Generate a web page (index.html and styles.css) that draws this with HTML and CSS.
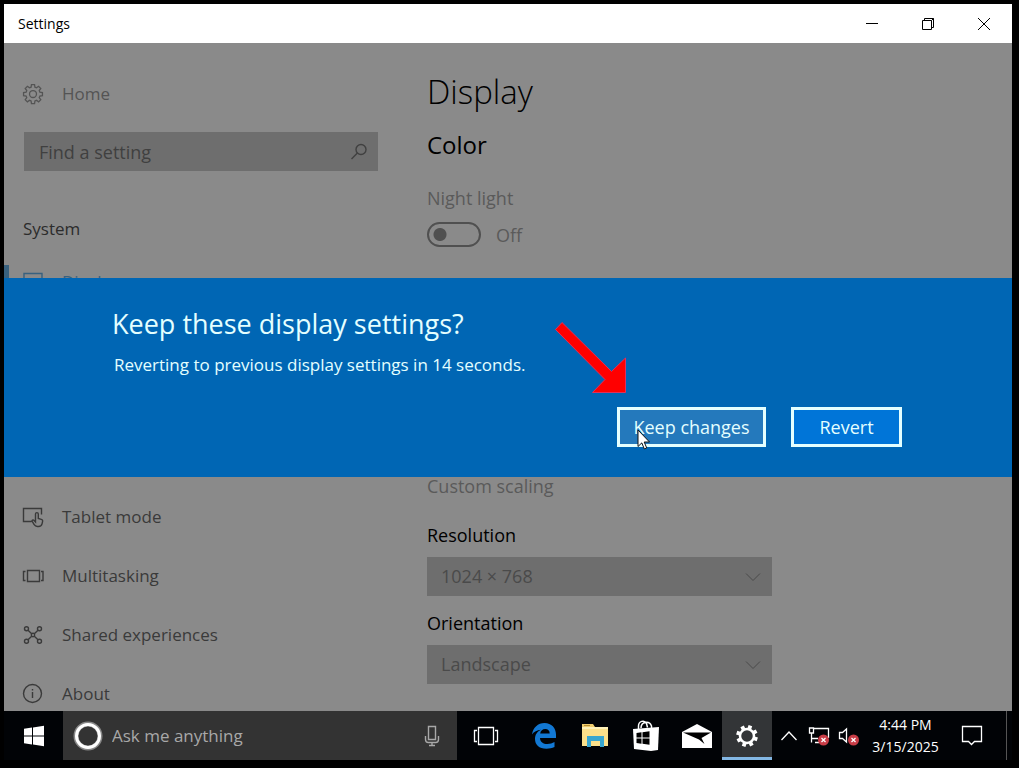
FILE: index.html
```html
<!DOCTYPE html>
<html lang="en">
<head>
    <meta charset="UTF-8">
    <meta name="viewport" content="width=device-width, initial-scale=1.0">
    <title>Settings</title>
    <link rel="stylesheet" href="styles.css">
</head>
<body>
    <header class="titlebar">
        <span class="titlebar-name">Settings</span>
        <div class="window-buttons">
            <button aria-label="Minimize">
                <svg width="14" height="14" viewBox="0 0 14 14"><path d="M1 6.5h12"/></svg>
            </button>
            <button aria-label="Restore">
                <svg width="14" height="14" viewBox="0 0 14 14"><path d="M1.5 3.500h9v9h-9zM3.500 3.500v-2h9v9h-2M10.500 3.500l2-2"/></svg>
            </button>
            <button aria-label="Close">
                <svg width="14" height="14" viewBox="0 0 14 14"><path d="M1 1l12 12M13 1L1 13"/></svg>
            </button>
        </div>
    </header>

    <div class="window">
        <nav class="sidebar">
            <a class="nav-item home" href="#">
                <svg width="22" height="22" viewBox="0 0 24 24"><path d="M10.300 1.800h3.400l.4 2.800 1.700.7 2.300-1.700 2.400 2.400-1.700 2.300.7 1.700 2.800.4v3.400l-2.800.4-.7 1.700 1.700 2.300-2.400 2.400-2.300-1.700-1.700.7-.4 2.800h-3.400l-.4-2.800-1.700-.7-2.300 1.700-2.400-2.400 1.700-2.300-.7-1.700-2.800-.4v-3.400l2.800-.4.7-1.700L3.500 6l2.400-2.400 2.300 1.700 1.700-.7z"/><circle cx="12" cy="12" r="3.800"/></svg>
                Home
            </a>
            <div class="search">
                <input type="text" placeholder="Find a setting" aria-label="Find a setting">
                <svg width="18" height="18" viewBox="0 0 18 18"><circle cx="11" cy="6.500" r="5"/><path d="M7.400 10.100L1.500 16"/></svg>
            </div>
            <h2 class="section-name">System</h2>
            <a class="nav-item active" href="#">
                <svg width="22" height="22" viewBox="0 0 22 22"><path d="M2 2.500h18v12H2zM11 14.500v4M6 18.500h10"/></svg>
                Display
            </a>
            <div class="nav-lower">
                <a class="nav-item" href="#">
                    <svg width="22" height="22" viewBox="0 0 22 22"><path d="M9.500 15.500h-8v-13h18v6M13.500 16V8a1.400 1.400 0 0 1 2.800 0v4.500l3 .8c1 .3 1.500 1 1.300 2l-.5 2.400c-.4 1.800-1.600 2.800-3.500 2.800h-1.200c-1.500 0-2.500-.6-3.200-1.800l-2-3.300c-.5-1 .8-1.900 1.700-1.200z"/></svg>
                    Tablet mode
                </a>
                <a class="nav-item" href="#">
                    <svg width="22" height="22" viewBox="0 0 22 22"><path d="M5.500 5.500h12v11h-12zM3.500 6.500h-2v9h2M19 6.500h2v9h-2"/></svg>
                    Multitasking
                </a>
                <a class="nav-item" href="#">
                    <svg width="22" height="22" viewBox="0 0 22 22"><circle cx="11" cy="11" r="1.700"/><circle cx="4.500" cy="4.700" r="2"/><circle cx="17.500" cy="4.700" r="2"/><circle cx="4.500" cy="17.300" r="2"/><circle cx="17.500" cy="17.300" r="2"/><path d="M6 6.200l3.700 3.600M16 6.200l-3.700 3.600M6 15.800l3.700-3.600M16 15.800l-3.700-3.600"/></svg>
                    Shared experiences
                </a>
                <a class="nav-item" href="#">
                    <svg width="22" height="22" viewBox="0 0 22 22"><circle cx="10.500" cy="10.500" r="9"/><path d="M10.500 9v6M10.500 6v1.500"/></svg>
                    About
                </a>
            </div>
        </nav>

        <main class="content">
            <h1>Display</h1>
            <h2>Color</h2>
            <label class="label muted" for="night-light">Night light</label>
            <div class="toggle-row">
                <input type="checkbox" class="toggle" id="night-light">
                <span class="muted">Off</span>
            </div>
            <a class="scaling-link muted" href="#">Custom scaling</a>
            <label class="label" for="resolution">Resolution</label>
            <div class="select-box">
                <select id="resolution"><option>1024 × 768</option></select>
                <svg width="16" height="10" viewBox="0 0 16 10"><path d="M1 1.500l7 7 7-7"/></svg>
            </div>
            <label class="label" for="orientation">Orientation</label>
            <div class="select-box">
                <select id="orientation"><option>Landscape</option></select>
                <svg width="16" height="10" viewBox="0 0 16 10"><path d="M1 1.500l7 7 7-7"/></svg>
            </div>
        </main>

        <div class="overlay">
            <section class="dialog" role="dialog" aria-labelledby="dialog-title">
                <h2 id="dialog-title">Keep these display settings?</h2>
                <p>Reverting to previous display settings in 14 seconds.</p>
                <div class="dialog-buttons">
                    <div class="keep-wrap">
                        <button class="dialog-btn keep">Keep changes</button>
                        <svg class="arrow" width="72" height="72" viewBox="0 0 72 72"><path d="M7 .5L56.500 49.500 70.500 36v34.500H37.500L50 57.500.5 7.500z"/></svg>
                        <svg class="cursor" width="14" height="22" viewBox="0 0 14 22"><path d="M1 1v16.500l3.800-3.600 2.500 6 2.400-1-2.500-5.900h5.300z"/></svg>
                    </div>
                    <button class="dialog-btn revert">Revert</button>
                </div>
            </section>
        </div>
    </div>

    <footer class="taskbar">
        <button class="start" aria-label="Start">
            <svg width="22" height="22" viewBox="0 0 22 22"><path d="M1 3.700l8-1.200v8H1zM10 2.400L21 .8v9.700H10zM1 11.500h8v8l-8-1.200zM10 11.500h11v9.700L10 19.600z"/></svg>
        </button>
        <div class="cortana">
            <svg width="30" height="30" viewBox="0 0 30 30"><circle class="ring-glow" cx="15" cy="15" r="12"/><circle class="ring" cx="15" cy="15" r="11.500"/></svg>
            <input type="text" placeholder="Ask me anything" aria-label="Ask me anything">
            <svg class="mic" width="16" height="22" viewBox="0 0 16 22"><path d="M4.500 1.500h7v13h-7zM1.500 11v3.500c0 1.800 1 3 2.800 3h7.400c1.800 0 2.800-1.200 2.800-3V11M8 17.500v3M5 20.500h6"/></svg>
        </div>
        <button class="task-view" aria-label="Task view">
            <svg width="26" height="20" viewBox="0 0 26 20"><path d="M5.500 1.500h15v17h-15zM4 4.500H1.500v11H4M22 4.500h2.500v11H22"/></svg>
        </button>
        <div class="apps">
            <button aria-label="Edge">
                <svg width="26" height="27" viewBox="0 0 26 27"><path fill="#1278d3" d="M1 12.500C2 5.500 7 1 13.500 1 20.500 1 25 6 25 12.500V16H9c.2 4 3.300 6 7.300 6 2.800 0 5-.7 7.200-2v5c-2.300 1.200-5 1.700-8 1.700C8 26.700 4 22.800 4 17c0-4.300 2.300-7.500 6-9.200C6 8 3 9.700 1 12.500zM9.200 11.500h9.500C18.700 8.500 17 7 14.300 7c-2.800 0-4.700 1.700-5.100 4.500z"/></svg>
            </button>
            <button aria-label="File Explorer">
                <svg width="28" height="25" viewBox="0 0 28 25"><path fill="#f0cc6c" d="M1 1h11l2 3h13v5H1z"/><path fill="#fbe08a" d="M1 4h26v19H1z"/><path fill="#fff1b8" d="M1 4h26v2H1z"/><path fill="#b58c32" d="M3 2h6v1H3z"/><path fill="#38a6cf" d="M6 24V13h17v11h-4v-6h-9v6z"/></svg>
            </button>
            <button aria-label="Store">
                <svg width="28" height="32" viewBox="0 0 28 32"><path fill="none" stroke="#fff" stroke-width="1.500" d="M6.500 10V6c0-5 6-6.500 8-2.500l1 4M9 8c0-6 8-8 10.500-2V8"/><path fill="#fff" d="M1 9l26-2-1 23-7 1L2 29z"/><path fill="#000" d="M4.500 13l5-.7v5.200h-5zM10.500 12.200l7-1v6.300h-7zM4.500 18.500h5v5.200l-5-.7zM10.500 18.500h7v6.300l-7-1z"/></svg>
            </button>
            <button aria-label="Mail">
                <svg width="32" height="26" viewBox="0 0 32 26"><path fill="#fff" d="M1 9L16 1l15 8v16H1z"/><path fill="#000" d="M2 9.500h28l-9.500 5.500 3 6L18 16.500z"/></svg>
            </button>
            <button class="running" aria-label="Settings">
                <svg width="24" height="24" viewBox="0 0 24 24"><circle fill="none" stroke="#fff" stroke-width="2.500" cx="12" cy="12" r="7"/><path stroke="#fff" stroke-width="3.800" d="M14.200 5.200l1.200-3.500M18.300 8.700l3.300-1.600M18.800 14.200l3.500 1.200M15.300 18.300l1.600 3.300M9.800 18.800l-1.200 3.500M5.700 15.300l-3.300 1.600M5.200 9.800L1.700 8.600M8.700 5.700L7.100 2.400"/></svg>
            </button>
        </div>
        <div class="tray">
            <button class="tray-btn" aria-label="Show hidden icons">
                <svg width="18" height="12" viewBox="0 0 18 12"><path d="M1.500 10L9 2l7.500 8"/></svg>
            </button>
            <button class="tray-btn" aria-label="Network">
                <svg width="22" height="20" viewBox="0 0 22 20"><path d="M6 2.500h14.500V12M1.500 2h4v5h-4zM3.500 7v9.500M3.500 12.500H10M7 16.500h4"/><circle class="error-dot" cx="15.500" cy="14" r="5.500"/><path d="M13.500 12l4 4M17.500 12l-4 4"/></svg>
            </button>
            <button class="tray-btn" aria-label="Volume">
                <svg width="22" height="20" viewBox="0 0 22 20"><path d="M1.500 6.500h3l4-3.500v13l-4-3.500h-3z"/><circle class="error-dot" cx="15.500" cy="14" r="5.500"/><path d="M13.500 12l4 4M17.500 12l-4 4"/></svg>
            </button>
            <div class="clock">
                <span>4:44 PM</span>
                <span>3/15/2025</span>
            </div>
            <button class="tray-btn notifications" aria-label="Notifications">
                <svg width="22" height="22" viewBox="0 0 22 22"><path d="M1.500 1.500h19v15h-7l-3 3-3-3h-6z"/></svg>
            </button>
            <button class="show-desktop" aria-label="Show desktop"></button>
        </div>
    </footer>
</body>
</html>
```
FILE: styles.css
```css
* {
    box-sizing: border-box;
}

body {
    display: flex;
    flex-direction: column;
    height: 100vh;
    margin: 0;
    padding: 4px 7px 8px 4px;
    background-color: #000;
    color: #000;
    font-family: "Open Sans", "Noto Sans", sans-serif;
    font-size: 18px;
    line-height: 24px;
}

h1, h2, p {
    margin: 0;
    font-weight: 400;
}

button, input, select {
    margin: 0;
    padding: 0;
    border: none;
    border-radius: 0;
    background: none;
    color: inherit;
    font: inherit;
}

a {
    color: inherit;
    text-decoration: none;
}

svg {
    flex: none;
    fill: none;
    stroke: currentColor;
}

/* Title bar */
.titlebar {
    display: flex;
    flex: none;
    justify-content: space-between;
    align-items: center;
    height: 39px;
    padding-left: 14px;
    background-color: #fff;
    font-size: 14px;
}

.window-buttons {
    display: flex;
    height: 100%;
}

.window-buttons button {
    display: flex;
    justify-content: center;
    align-items: center;
    width: 56px;
}

/* Settings window */
.window {
    position: relative;
    display: flex;
    flex: 1;
    gap: 49px;
    min-height: 0;
    overflow: hidden;
    background-color: #8a8a8a;
}

.sidebar {
    flex: none;
    width: 374px;
    padding-top: 34px;
    color: #3a3a3a;
}

.nav-item {
    display: flex;
    align-items: center;
    gap: 18px;
    height: 33px;
    margin-bottom: 26px;
    padding-left: 18px;
    font-size: 17px;
}

.nav-item svg {
    stroke-width: 1.4;
}

.nav-item.home {
    margin-bottom: 22px;
    color: #545454;
}

.nav-item.active {
    box-shadow: inset 5px 0 #38617f;
    color: #38617f;
}

.nav-lower {
    margin-top: 202px;
}

.search {
    display: flex;
    align-items: center;
    height: 39px;
    margin-left: 20px;
    padding: 0 10px 0 15px;
    background-color: #6e6e6e;
    color: #404040;
}

.search input {
    flex: 1;
    min-width: 0;
}

.search svg {
    stroke-width: 1.4;
}

input::placeholder {
    color: inherit;
    opacity: 1;
}

.section-name {
    margin: 46px 0 24px;
    padding-left: 19px;
    font-size: 17px;
    line-height: 24px;
    color: #2c2c2c;
}

.content {
    flex: 1;
    padding-top: 27px;
}

.content h1 {
    font-size: 33px;
    font-weight: 300;
    line-height: 44px;
}

.content h2 {
    margin-top: 14px;
    font-size: 24px;
    line-height: 34px;
}

.label {
    display: block;
}

.muted {
    color: #5a5a5a;
}

.content h2 + .label {
    margin-top: 24px;
}

.toggle-row {
    display: flex;
    align-items: center;
    gap: 15px;
    margin-top: 12px;
}

.toggle {
    width: 54px;
    height: 25px;
    border: 2px solid #505050;
    border-radius: 13px;
    background: radial-gradient(circle at 11px 50%, #505050 6px, transparent 7px);
    appearance: none;
}

.scaling-link {
    display: block;
    margin: 227px 0 25px;
}

.select-box {
    position: relative;
    max-width: 345px;
    margin: 10px 0 15px;
    background-color: #6e6e6e;
    color: #4a4a4a;
}

.select-box select {
    display: block;
    width: 100%;
    height: 39px;
    padding: 0 0 2px 14px;
    appearance: none;
}

.select-box svg {
    position: absolute;
    top: 15px;
    right: 11px;
    pointer-events: none;
}

/* Confirmation dialog, lies over the whole window */
.overlay {
    position: absolute;
    inset: 0;
    display: flex;
    align-items: center;
    padding-top: 1px;
}

.dialog {
    width: 100%;
    padding: 28px 110px 30px 108px;
    background-color: #0066b4;
    color: #e4ffff;
}

.dialog h2 {
    font-size: 27px;
    line-height: 36px;
}

.dialog p {
    margin-top: 11px;
    padding-left: 2px;
    font-size: 17px;
}

.dialog-buttons {
    display: flex;
    justify-content: flex-end;
    gap: 25px;
    margin-top: 30px;
}

.keep-wrap {
    position: relative;
}

.dialog-btn {
    display: block;
    height: 40px;
    border: 3px solid #e4ffff;
}

.keep {
    width: 149px;
    background-color: #2479bc;
}

.revert {
    width: 111px;
    background-color: #0075d8;
}

.arrow {
    position: absolute;
    top: -85px;
    left: -62px;
    fill: #f00;
    stroke: #e0305a;
}

.cursor {
    position: absolute;
    top: 22px;
    left: 20px;
    fill: #fff;
    stroke: #111;
}

/* Taskbar */
.taskbar {
    display: flex;
    flex: none;
    height: 49px;
    background-color: #010306;
    color: #fff;
}

.taskbar button {
    display: flex;
    flex: none;
    justify-content: center;
    align-items: center;
}

.start {
    width: 59px;
}

.start svg {
    fill: #fff;
    stroke: none;
}

.cortana {
    display: flex;
    flex: 0 1 394px;
    align-items: center;
    gap: 9px;
    min-width: 0;
    padding: 0 17px 0 10px;
    background-color: #333;
    color: #a8a8a8;
    font-size: 17px;
}

.cortana input {
    flex: 1;
    min-width: 0;
}

.mic {
    stroke-width: 1.4;
}

.ring {
    stroke: #fff;
    stroke-width: 3;
}

.ring-glow {
    stroke: #888;
    stroke-width: 5;
}

.task-view {
    width: 58px;
}

.task-view svg {
    stroke-width: 1.3;
}

.apps {
    display: flex;
    margin-left: 3px;
}

.apps button {
    width: 51px;
}

.apps svg {
    stroke: none;
}

.apps .running {
    width: 50px;
    background-color: #333537;
    box-shadow: inset 0 -3px #83b7e4;
}

.tray {
    display: flex;
    margin-left: auto;
}

.tray-btn {
    width: 30px;
}

.tray-btn svg {
    stroke-width: 1.3;
}

.error-dot {
    fill: #c83c46;
    stroke: none;
}

.clock {
    display: flex;
    flex-direction: column;
    justify-content: center;
    width: 83px;
    font-size: 14px;
    line-height: 22px;
    text-align: center;
}

.taskbar .notifications {
    width: 50px;
    margin-right: 9px;
}

.show-desktop {
    width: 6px;
    border-left: 1px solid #555;
}
```
